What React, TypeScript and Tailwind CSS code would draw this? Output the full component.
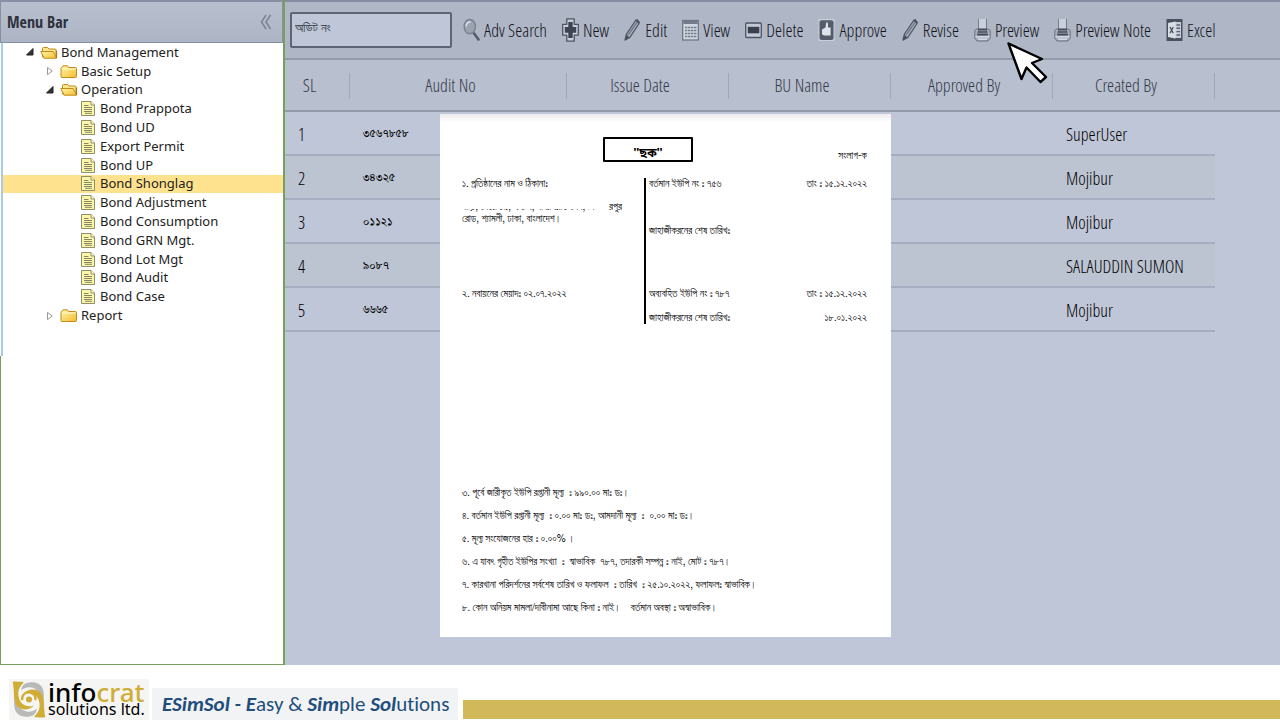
import type { ReactNode } from "react";

const UI = "font-['Open_Sans_Condensed_Light','Roboto_Condensed','Open_Sans',sans-serif]";
const BN = "font-['FreeSans','Noto_Sans_Bengali',sans-serif]";
const BN_SERIF = "font-['FreeSerif','Noto_Serif_Bengali',serif]";

function FolderIcon({ open }: { open: boolean }) {
  return (
    <svg className="h-[15px] w-[18px] shrink-0" viewBox="0 0 18 15" aria-hidden="true">
      <defs>
        <linearGradient id="folderFill" x1="0" y1="0" x2="1" y2="1">
          <stop offset="0" stopColor="#fff6a8" />
          <stop offset="1" stopColor="#f3bd2f" />
        </linearGradient>
      </defs>
      {open ? (
        <>
          <path d="M2.5 12V3.5Q2.5 2.5 3.5 2.5H7.5L9 4H15Q16 4 16 5V12.5Z" fill="#fbe58a" stroke="#c48a1c" />
          <path d="M.8 6.5H13.2L16.5 13.2H4Z" fill="url(#folderFill)" stroke="#c48a1c" strokeLinejoin="round" />
          <path d="M16.6 5.5V13" stroke="#a86d10" />
        </>
      ) : (
        <>
          <path d="M1 4.5Q1 3.5 2 3.5L3 1.8H7.5L8.5 3.5H15.5Q16.5 3.5 16.5 4.5V12.5Q16.5 13.5 15.5 13.5H2Q1 13.5 1 12.5Z" fill="url(#folderFill)" stroke="#c48a1c" />
          <path d="M2 5H15.5" stroke="#fffbd8" />
        </>
      )}
    </svg>
  );
}

function PageIcon() {
  return (
    <svg className="h-[15px] w-[14px] shrink-0" viewBox="0 0 14 15" aria-hidden="true">
      <path d="M.5.5H10L13.5 4V14.5H.5Z" fill="#fbf7a6" stroke="#8f8f6a" />
      <path d="M10 .5V4H13.5" fill="#fffde0" stroke="#8f8f6a" />
      <path d="M3 4.5H7.5M3 6.5H11M3 8.5H11M3 10.5H11M4 12.3H11" stroke="#85856a" />
    </svg>
  );
}

function Arrow({ open }: { open: boolean }) {
  return (
    <svg className="h-[10px] w-[8px] shrink-0" viewBox="0 0 8 10" aria-hidden="true">
      {open ? <path d="M7 1.5V8H.5Z" fill="#333" stroke="#222" strokeLinejoin="round" /> : <path d="M1.5 1.5L6.3 5L1.5 8.7Z" fill="#fff" stroke="#999" />}
    </svg>
  );
}

type Node = { label: string; level: number; kind: "open" | "closed" | "page"; active?: boolean };

const tree: Node[] = [
  { label: "Bond Management", level: 0, kind: "open" },
  { label: "Basic Setup", level: 1, kind: "closed" },
  { label: "Operation", level: 1, kind: "open" },
  { label: "Bond Prappota", level: 2, kind: "page" },
  { label: "Bond UD", level: 2, kind: "page" },
  { label: "Export Permit", level: 2, kind: "page" },
  { label: "Bond UP", level: 2, kind: "page" },
  { label: "Bond Shonglag", level: 2, kind: "page", active: true },
  { label: "Bond Adjustment", level: 2, kind: "page" },
  { label: "Bond Consumption", level: 2, kind: "page" },
  { label: "Bond GRN Mgt.", level: 2, kind: "page" },
  { label: "Bond Lot Mgt", level: 2, kind: "page" },
  { label: "Bond Audit", level: 2, kind: "page" },
  { label: "Bond Case", level: 2, kind: "page" },
  { label: "Report", level: 1, kind: "closed" },
];

const indent = ["pl-[23px]", "pl-[43px]", "pl-[78px]"];

function Sidebar() {
  return (
    <aside className="flex w-[285px] shrink-0 flex-col border-r-2 border-[#78a05c] bg-white">
      <header className="flex h-[43px] items-center justify-between border border-t-2 border-[#8790a3] bg-linear-to-b from-[#b8c0d0] to-[#adb5c5] pr-[10px] pl-[6px]">
        <h1 className="font-['Open_Sans_Condensed','Open_Sans',sans-serif] text-[16px] font-bold text-[#2d323c]">Menu Bar</h1>
        <button type="button" aria-label="Collapse menu">
          <svg className="h-[16px] w-[12px]" viewBox="0 0 12 16" fill="none" stroke="#7b8392" strokeWidth="1.5" aria-hidden="true">
            <path d="M6 1L1.5 8L6 15M10.5 1L6 8L10.5 15" />
          </svg>
        </button>
      </header>
      <nav className="ml-px h-[313px] border-l-2 border-[#a9cbe6]">
        <ul className="grid h-[282px] auto-rows-fr font-['Noto_Sans',sans-serif] text-[13px] leading-none text-[#222]">
          {tree.map((n) => (
            <li key={n.label} className={n.active ? "bg-[#ffe28d]" : ""}>
              <a href="#" className={`flex h-full items-center ${indent[n.level]}`}>
                {n.kind === "page" ? (
                  <PageIcon />
                ) : (
                  <span className="flex items-center gap-[6px]">
                    <Arrow open={n.kind === "open"} />
                    <FolderIcon open={n.kind === "open"} />
                  </span>
                )}
                <span className={n.kind === "page" ? "pl-[5px]" : "pl-[3px]"}>{n.label}</span>
              </a>
            </li>
          ))}
        </ul>
      </nav>
      <div className="flex-1 border-b border-l border-[#78a05c]" />
    </aside>
  );
}

function ToolIcon({ children }: { children: ReactNode }) {
  return (
    <svg className="h-[24px] w-[17px] shrink-0" viewBox="0 0 17 24" fill="none" aria-hidden="true">
      {children}
    </svg>
  );
}

const pencil = (
  <ToolIcon>
    <path d="M1 22L2.5 16L12 2L15 5.5L5.8 19.5Z" fill="#a7afbd" stroke="#4a505c" strokeWidth="1.2" strokeLinejoin="round" />
    <path d="M4.2 17L13.2 4" stroke="#69707e" strokeWidth="1.3" />
    <path d="M2.6 16.4L5.4 19.5L1 22.4Z" fill="#4a505c" />
    <path d="M12 2L13.3 1L16 4.2L15 5.5Z" fill="#4a505c" />
  </ToolIcon>
);

const printer = (
  <ToolIcon>
    <path d="M.8 12.5L4 10.5H13L16.2 12.5V20L14 23H3L.8 20Z" fill="#a9b1bf" stroke="#6a717f" />
    <path d="M4.5 12V1H12.5V12Z" fill="#c9cfdb" />
    <path d="M4.5 12V1M12.5 12V1" stroke="#737a88" />
    <path d="M4.5 10.5H12.5L14 17.5H3Z" fill="#434955" />
    <path d="M4.5 12.8H12.5M4 15.2H13" stroke="#9aa2b0" />
    <path d="M1.5 18.8H15.5" stroke="#dde2eb" strokeWidth="1.2" />
    <path d="M4 21.2H13" stroke="#d3d9e4" strokeWidth="1.5" />
  </ToolIcon>
);

const tools: { label: string; icon: ReactNode }[] = [
  {
    label: "Adv Search",
    icon: (
      <ToolIcon>
        <path d="M10 14L15.5 21.5" stroke="#555c69" strokeWidth="2.6" strokeLinecap="round" />
        <ellipse cx="6.8" cy="8.6" rx="5.6" ry="7.2" fill="#9ba3b1" stroke="#7c8492" strokeWidth="1.5" />
        <path d="M3.2 8.5C3.2 5.5 5 3.6 7.5 4" stroke="#dde2eb" strokeWidth="1.5" />
      </ToolIcon>
    ),
  },
  {
    label: "New",
    icon: (
      <ToolIcon>
        <path d="M4.8.8H12.2V6.3H16.3V17.2H12.2V23.2H4.8V17.2H.7V6.3H4.8Z" fill="#c9cfdb" stroke="#4d5461" strokeWidth="1.3" strokeLinejoin="round" />
        <path d="M6.3 4H10.7V9H14.2V14.8H10.7V20H6.3V14.8H2.8V9H6.3Z" fill="#3f4550" />
      </ToolIcon>
    ),
  },
  { label: "Edit", icon: pencil },
  {
    label: "View",
    icon: (
      <ToolIcon>
        <rect x=".7" y="2.5" width="15.6" height="19.5" fill="#d0d6e1" stroke="#6b7280" strokeWidth="1.2" />
        <rect x="1.3" y="3" width="14.4" height="3" fill="#747c8b" />
        <path d="M3 9.5H14.5M3 12.5H14.5M3 15.5H14.5M3 18.5H14.5" stroke="#737b89" strokeWidth="1.5" strokeDasharray="2.4 .6" />
      </ToolIcon>
    ),
  },
  {
    label: "Delete",
    icon: (
      <ToolIcon>
        <rect x=".7" y="5" width="15.6" height="14.5" rx="1" fill="#c3cad7" stroke="#4d5461" strokeWidth="1.3" />
        <rect x="2.8" y="8.8" width="11.5" height="6.5" fill="#3a404b" />
      </ToolIcon>
    ),
  },
  {
    label: "Approve",
    icon: (
      <ToolIcon>
        <rect x=".5" y="1" width="16" height="22" fill="#c8cedb" />
        <rect x="1.5" y="2.2" width="14" height="19.8" rx="2" fill="#565d6a" />
        <path d="M4 11.5L7.5 9.5L8.3 4.3C9.8 4 10.3 5.2 10 9.5H12.6V17.5H6L4 16.2Z" fill="#dfe3ec" />
      </ToolIcon>
    ),
  },
  { label: "Revise", icon: pencil },
  { label: "Preview", icon: printer },
  { label: "Preview Note", icon: printer },
  {
    label: "Excel",
    icon: (
      <ToolIcon>
        <path d="M.5 1H16.5V23H.5Z" fill="#4a515e" />
        <path d="M9 4H15V20H9Z" fill="#c5ccd8" />
        <path d="M10.5 7H14M10.5 10.3H14M10.5 13.6H14M10.5 17H14" stroke="#5b6270" strokeWidth="1.4" />
        <path d="M2 5L9.5 3.5V20.5L2 19Z" fill="#d8dde7" />
        <path d="M4 9L7.3 15.2M7.3 9L4 15.2" stroke="#474e5a" strokeWidth="1.3" />
      </ToolIcon>
    ),
  },
];

function Toolbar() {
  return (
    <div className="flex h-[60px] items-center border-t-2 border-b-2 border-t-[#858da0] border-b-[#939bab] bg-[#afb6c5] pl-[5px]">
      <input
        aria-label="অডিট নং"
        placeholder="অডিট নং"
        className={`${BN} h-[36px] w-[162px] shrink-0 rounded-[2px] border-2 border-[#5d6474] bg-[#bfc6d8] px-[3px] pb-[3px] text-[13px] text-[#333] placeholder:text-[#333843]`}
      />
      <div className="flex items-center gap-[15px] pl-[11px]">
        {tools.map((t) => (
          <button key={t.label} type="button" className="flex items-center gap-[4px] text-[18px] whitespace-nowrap text-[#12151b]">
            {t.icon}
            {t.label}
          </button>
        ))}
      </div>
    </div>
  );
}

const columns = [
  { label: "SL", width: "w-[65px]" },
  { label: "Audit No", width: "w-[217px]" },
  { label: "Issue Date", width: "w-[162px]" },
  { label: "BU Name", width: "w-[162px]" },
  { label: "Approved By", width: "w-[162px]" },
  { label: "Created By", width: "w-[162px]" },
];

const rows = [
  ["1", "৩৫৬৭৮৫৮", "SuperUser"],
  ["2", "৩৪৩২৫", "Mojibur"],
  ["3", "০১১২১", "Mojibur"],
  ["4", "৯০৮৭", "SALAUDDIN SUMON"],
  ["5", "৬৬৬৫", "Mojibur"],
];

const cell = "border-b-2 border-[#a5adbe] p-0 group-even:bg-[#bcc4d2]";

function AuditTable() {
  return (
    <table className="w-full table-fixed border-separate border-spacing-0 text-[18px]">
      <thead>
        <tr className="h-[52px] bg-[#b8bfcf] text-[#343a47]">
          {columns.map((c) => (
            <th key={c.label} scope="col" className={`${c.width} border-b-2 border-[#939bab] p-0 pt-px font-normal`}>
              <span className="flex h-[26px] items-center justify-center border-r border-[#a0a8b8] pr-[15px]">{c.label}</span>
            </th>
          ))}
          <td className="border-b-2 border-[#939bab]" />
        </tr>
      </thead>
      <tbody className="text-black">
        {rows.map(([sl, audit, by]) => (
          <tr key={sl} className="group h-[44px]">
            <td className={`${cell} pt-[2px] pl-[13px]`}>{sl}</td>
            <td className={`${cell} ${BN_SERIF} pt-[4px] pl-[13px] text-[13px]`}>{audit}</td>
            <td className={cell} />
            <td className={cell} />
            <td className={cell} />
            <td className={`${cell} pt-[2px] pl-[13px] whitespace-nowrap`}>{by}</td>
            <td />
          </tr>
        ))}
      </tbody>
    </table>
  );
}

const notes = [
  "৩. পূর্বে জারীকৃত ইউপি রপ্তানী মূল্য \u00a0ঃ ৯৯০.০০ মাঃ ডঃ।",
  "৪. বর্তমান ইউপি রপ্তানী মূল্য \u00a0ঃ ০.০০ মাঃ ডঃ, আমদানী মূল্য \u00a0ঃ  ০.০০ মাঃ ডঃ।",
  "৫. মূল্য সংযোজনের হার\u00a0ঃ ০.০০% ।",
  "৬. এ যাবৎ গৃহীত ইউপির সংখ্যা \u00a0ঃ  স্বাভাবিক  ৭৮৭, তদারকী সম্পন্ন\u00a0ঃ নাই, মোট\u00a0ঃ ৭৮৭।",
  "৭. কারখানা পরিদর্শনের সর্বশেষ তারিখ ও ফলাফল \u00a0ঃ তারিখ \u00a0ঃ ২৫.১০.২০২২, ফলাফলঃ স্বাভাবিক।",
  "৮. কোন অনিয়ম মামলা/দাবীনামা আছে কিনা\u00a0ঃ নাই।    বর্তমান অবস্থা\u00a0ঃ অস্বাভাবিক।",
];

function PreviewSheet() {
  return (
    <article className={`${BN} absolute top-[114px] left-[155px] w-[451px] bg-white bg-linear-to-b from-[#ececee] to-white to-[8px] pt-[23px] pr-[24px] pb-[17px] pl-[22px] text-[10px] leading-[12px] whitespace-pre text-black`}>
      <div className="flex h-[25px] items-center justify-between pl-[141px]">
        <h2 className="flex h-full w-[90px] items-end justify-center rounded-[1px] border-2 border-black text-[12px] leading-[13px] font-bold">"ছক"</h2>
        <span className="pt-[12px]">সংলাগ-ক</span>
      </div>
      <div className="mt-[16px] grid grid-cols-[182px_1fr]">
        <div>
          <p>১. প্রতিষ্ঠানের নাম ও ঠিকানাঃ</p>
          <p className="mt-[12px] flex leading-[11px]">
            <span className="relative w-[147px] overflow-hidden">
              বাড়ি, সেক্টর ১৯, ২২/এ, বাবর রোড লেন, মি
              <span className="absolute inset-x-0 top-0 h-[7px] bg-white" />
            </span>
            রপুর
          </p>
          <p>রোড, শ্যামলী, ঢাকা, বাংলাদেশ।</p>
          <p className="mt-[63px]">২. নবায়নের মেয়াদঃ ০২.০৭.২০২২</p>
        </div>
        <div className="border-l-2 border-black pl-[3px]">
          <p className="flex justify-between"><span>বর্তমান ইউপি নং{"\u00a0"}ঃ ৭৫৬</span><span>তাং{"\u00a0"}ঃ ১৫.১২.২০২২</span></p>
          <p className="mt-[35px]">জাহাজীকরনের শেষ তারিখঃ</p>
          <p className="mt-[51px] flex justify-between"><span>অব্যবহিত ইউপি নং{"\u00a0"}ঃ ৭৮৭</span><span>তাং{"\u00a0"}ঃ ১৫.১২.২০২২</span></p>
          <p className="mt-[12px] flex justify-between"><span>জাহাজীকরনের শেষ তারিখঃ</span><span>১৮.০১.২০২২</span></p>
        </div>
      </div>
      <div className="mt-[158px] leading-[23px]">
        {notes.map((n) => (
          <p key={n}>{n}</p>
        ))}
      </div>
    </article>
  );
}

const goldBand = "M2 2C10 0 18 2 28 2C32 2 34 3 34 5C24 14 17 26 19 42C21 60 32 72 50 74C56 75 60 74 64 72C56 84 34 88 18 76C2 63 8 28 2 2Z";
const greyBand = "M38 8C58 -1 84 3 91 24C97 42 90 56 96 70C86 62 84 40 74 28C62 15 42 15 27 27C28 18 32 11 38 8Z";

function LogoMark() {
  return (
    <svg className="h-[37px] w-[34px] shrink-0" viewBox="0 0 100 108" fill="none" aria-hidden="true">
      <path d={greyBand} fill="#b9b9b9" />
      <path d={greyBand} fill="#b9b9b9" transform="rotate(180 50 54)" />
      <path d={goldBand} fill="#d0ad36" />
      <path d={goldBand} fill="#d0ad36" transform="rotate(180 50 54)" />
      <path d="M30 56C28 36 48 26 63 38C69 43 70 50 68 56" stroke="#d0ad36" strokeWidth="7" />
      <circle cx="50" cy="54" r="9" fill="#d0ad36" />
    </svg>
  );
}

function Footer() {
  return (
    <footer className="flex h-[55px] items-end bg-white">
      <div className="ml-[9px] flex h-[41px] w-[140px] shrink-0 items-center gap-[2px] bg-[#f5f5f4] pl-[3px]">
        <LogoMark />
        <div className="font-['Noto_Sans',sans-serif] whitespace-nowrap">
          <p className="text-[26px] leading-[20px] font-medium text-black">
            info<span className="text-[#d0ad36]">crat</span>
          </p>
          <p className="text-[16px] leading-[15px] text-black">solutions ltd.</p>
        </div>
      </div>
      <p className="ml-[3px] h-[32px] w-[306px] shrink-0 bg-[#f2f3f4] pl-[10px] font-['Carlito','Lato',sans-serif] text-[21px] leading-[33px] whitespace-nowrap text-[#1f4e7c] [font-variant-ligatures:none]">
        <b><i>ESimSol - E</i></b>asy &amp; <b><i>Sim</i></b>ple <b><i>Sol</i></b>utions
      </p>
      <div className="mb-px ml-[5px] h-[19px] flex-1 bg-[#d1b85a]" />
    </footer>
  );
}

export default function App() {
  return (
    <div className={`${UI} flex min-h-screen flex-col bg-white`}>
      <div className="flex flex-1">
        <Sidebar />
        <main className="relative min-w-0 flex-1 bg-[#bfc6d7]">
          <Toolbar />
          <AuditTable />
          <PreviewSheet />
          <svg className="absolute top-[41px] left-[721px] h-[44px] w-[44px]" viewBox="0 0 44 44" aria-hidden="true">
            <path d="M2.5 2.5L36 18L26 22L40 36L34.5 41L20.5 26.5L15.5 38Z" fill="#fff" stroke="#000" strokeWidth="2.4" strokeLinejoin="round" />
          </svg>
        </main>
      </div>
      <Footer />
    </div>
  );
}
